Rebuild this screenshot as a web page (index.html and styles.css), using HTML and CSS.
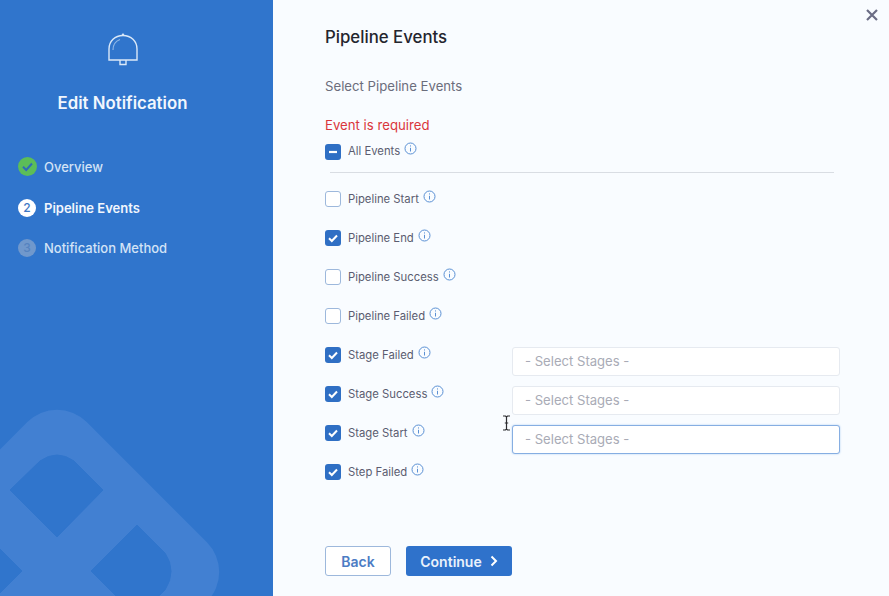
FILE: index.html
```html
<!DOCTYPE html>
<html lang="en">
<head>
<meta charset="utf-8">
<title>Edit Notification</title>
<link rel="stylesheet" href="styles.css">
</head>
<body>
<div class="dialog">
  <aside class="side">
    <svg class="mark" width="273" height="596" viewBox="0 0 273 596" aria-hidden="true">
      <rect class="mark-body" x="-70" y="445" width="254" height="254" rx="42" transform="rotate(45 57 572)"/>
      <path class="mark-hole" d="M10 490 L40 461 Q57 449 74 461 L103 490 L57 537 Z"/>
      <path class="mark-hole" d="M91 571 L137 525 L165 553 Q177 571 165 590 L137 617 Z"/>
      <path class="mark-hole" d="M22 571 L-24 525 L-50 571 L-24 617 Z"/>
    </svg>
    <svg class="bell" width="32" height="34" viewBox="0 0 32 34" aria-hidden="true">
      <path d="M2 27 V16 C2 8 8 2.500 16 2.500 C24 2.500 30 8 30 16 V27 Z" fill="none" stroke="#dbe9f8" stroke-width="1.400"/>
      <path d="M15 2.300 L16 1 L17 2.300" fill="none" stroke="#dbe9f8" stroke-width="1.200"/>
      <path d="M13 27 V31.500 H19 V27" fill="none" stroke="#dbe9f8" stroke-width="1.400"/>
      <path d="M6 17 C6 12 9 8 13 6.500" fill="none" stroke="#8db6e6" stroke-width="1.200"/>
    </svg>
    <h2 class="side-title">Edit Notification</h2>
    <ol class="steps">
      <li class="step step-done">
        <span class="bullet bullet-done">
          <svg width="19" height="19" viewBox="0 0 19 19" aria-hidden="true"><path d="M5 9.800 L8.200 13 L14 6.500" fill="none" stroke="#2f6bb8" stroke-width="2"/></svg>
        </span>
        <span>Overview</span>
      </li>
      <li class="step step-active"><span class="bullet bullet-active">2</span><span>Pipeline Events</span></li>
      <li class="step step-next"><span class="bullet bullet-next">3</span><span>Notification Method</span></li>
    </ol>
  </aside>
  <main class="main">
    <button class="close" type="button" aria-label="Close">
      <svg width="12" height="12" viewBox="0 0 12 12" aria-hidden="true"><path d="M1 1 L11 11 M11 1 L1 11" stroke="#6b6d85" stroke-width="2.200"/></svg>
    </button>
    <h1 class="title">Pipeline Events</h1>
    <p class="sub">Select Pipeline Events</p>
    <p class="error">Event is required</p>
    <div class="row row-all">
      <span class="check check-on"><svg width="16" height="16" viewBox="0 0 16 16" aria-hidden="true"><path d="M4 8 H12" stroke="#fff" stroke-width="2.200"/></svg></span>
      <span class="label">All Events</span>
      <svg class="info" width="13" height="13" viewBox="0 0 13 13" aria-hidden="true"><circle cx="6.500" cy="6.500" r="5.500"/><path d="M6.500 5.800 V9.500 M6.500 3.400 V4.500"/></svg>
    </div>
    <hr class="rule">
    <div class="list">
      <div class="row">
        <span class="check"></span><span class="label">Pipeline Start</span>
        <svg class="info" width="13" height="13" viewBox="0 0 13 13" aria-hidden="true"><circle cx="6.500" cy="6.500" r="5.500"/><path d="M6.500 5.800 V9.500 M6.500 3.400 V4.500"/></svg>
      </div>
      <div class="row">
        <span class="check check-on"><svg width="16" height="16" viewBox="0 0 16 16" aria-hidden="true"><path d="M4 8.300 L6.800 11 L12 5.500" fill="none" stroke="#fff" stroke-width="2"/></svg></span><span class="label">Pipeline End</span>
        <svg class="info" width="13" height="13" viewBox="0 0 13 13" aria-hidden="true"><circle cx="6.500" cy="6.500" r="5.500"/><path d="M6.500 5.800 V9.500 M6.500 3.400 V4.500"/></svg>
      </div>
      <div class="row">
        <span class="check"></span><span class="label">Pipeline Success</span>
        <svg class="info" width="13" height="13" viewBox="0 0 13 13" aria-hidden="true"><circle cx="6.500" cy="6.500" r="5.500"/><path d="M6.500 5.800 V9.500 M6.500 3.400 V4.500"/></svg>
      </div>
      <div class="row">
        <span class="check"></span><span class="label">Pipeline Failed</span>
        <svg class="info" width="13" height="13" viewBox="0 0 13 13" aria-hidden="true"><circle cx="6.500" cy="6.500" r="5.500"/><path d="M6.500 5.800 V9.500 M6.500 3.400 V4.500"/></svg>
      </div>
      <div class="row">
        <div class="cell">
          <span class="check check-on"><svg width="16" height="16" viewBox="0 0 16 16" aria-hidden="true"><path d="M4 8.300 L6.800 11 L12 5.500" fill="none" stroke="#fff" stroke-width="2"/></svg></span><span class="label">Stage Failed</span>
          <svg class="info" width="13" height="13" viewBox="0 0 13 13" aria-hidden="true"><circle cx="6.500" cy="6.500" r="5.500"/><path d="M6.500 5.800 V9.500 M6.500 3.400 V4.500"/></svg>
        </div>
        <div class="select">- Select Stages -</div>
      </div>
      <div class="row">
        <div class="cell">
          <span class="check check-on"><svg width="16" height="16" viewBox="0 0 16 16" aria-hidden="true"><path d="M4 8.300 L6.800 11 L12 5.500" fill="none" stroke="#fff" stroke-width="2"/></svg></span><span class="label">Stage Success</span>
          <svg class="info" width="13" height="13" viewBox="0 0 13 13" aria-hidden="true"><circle cx="6.500" cy="6.500" r="5.500"/><path d="M6.500 5.800 V9.500 M6.500 3.400 V4.500"/></svg>
        </div>
        <div class="select">- Select Stages -</div>
      </div>
      <div class="row">
        <div class="cell">
          <span class="check check-on"><svg width="16" height="16" viewBox="0 0 16 16" aria-hidden="true"><path d="M4 8.300 L6.800 11 L12 5.500" fill="none" stroke="#fff" stroke-width="2"/></svg></span><span class="label">Stage Start</span>
          <svg class="info" width="13" height="13" viewBox="0 0 13 13" aria-hidden="true"><circle cx="6.500" cy="6.500" r="5.500"/><path d="M6.500 5.800 V9.500 M6.500 3.400 V4.500"/></svg>
        </div>
        <div class="select select-focus">- Select Stages -</div>
      </div>
      <div class="row">
        <span class="check check-on"><svg width="16" height="16" viewBox="0 0 16 16" aria-hidden="true"><path d="M4 8.300 L6.800 11 L12 5.500" fill="none" stroke="#fff" stroke-width="2"/></svg></span><span class="label">Step Failed</span>
        <svg class="info" width="13" height="13" viewBox="0 0 13 13" aria-hidden="true"><circle cx="6.500" cy="6.500" r="5.500"/><path d="M6.500 5.800 V9.500 M6.500 3.400 V4.500"/></svg>
      </div>
    </div>
    <div class="actions">
      <button class="btn btn-back" type="button">Back</button>
      <button class="btn btn-next" type="button">Continue
        <svg width="8" height="12" viewBox="0 0 8 12" aria-hidden="true"><path d="M1.500 1.500 L6 6 L1.500 10.500" fill="none" stroke="#fff" stroke-width="2"/></svg>
      </button>
    </div>
    <svg class="cursor" width="9" height="16" viewBox="0 0 9 16" aria-hidden="true">
      <path d="M1 1 H3.500 L4.500 2 L5.500 1 H8 M4.500 2 V14 M1 15 H3.500 L4.500 14 L5.500 15 H8 M2.800 8 H6.200" fill="none" stroke="#2c2c30" stroke-width="1.200"/>
    </svg>
  </main>
</div>
</body>
</html>
```
FILE: styles.css
```css
* { box-sizing: border-box; }
html, body { margin: 0; height: 100%; }
body { font-family: Inter, "Liberation Sans", sans-serif; background: #f9fcff; overflow: hidden; }
.dialog { display: flex; width: 889px; height: 596px; }

.side {
  position: relative;
  width: 273px;
  flex: none;
  background: #3075cc;
  display: flex;
  flex-direction: column;
  overflow: hidden;
  color: #e6f0fb;
}
.mark { position: absolute; left: 0; top: 0; }
.mark-body { fill: #4280d2; }
.mark-hole { fill: #3075cc; stroke: #3075cc; stroke-width: 1; stroke-linejoin: round; }
.bell { position: relative; margin: 33px 0 0 107px; display: block; }
.side-title {
  position: relative;
  margin: 26px 0 0;
  width: 245px;
  font-size: 16.800px;
  line-height: 20px;
  font-weight: 600;
  text-align: center;
  color: #f1f6fd;
}
.steps { position: relative; list-style: none; margin: 44px 0 0; padding: 0 0 0 18px; }
.step { display: flex; align-items: center; height: 19px; font-size: 13px; gap: 7px; margin-bottom: 22px; }
.step-next { margin-top: -1px; }
.step-done { color: #d3e3f6; font-weight: 500; }
.step-active { color: #f1f6fd; font-weight: 600; }
.step-next { color: #d3e3f6; font-weight: 500; }
.bullet {
  width: 19px; height: 19px; border-radius: 50%;
  display: flex; align-items: center; justify-content: center;
  font-size: 12px; font-weight: 500; flex: none;
}
.bullet-done { background: #5cbd58; }
.bullet-active { background: #fff; color: #3f78c4; width: 18px; height: 18px; margin-right: 1px; }
.bullet-next { background: #7098cc; color: #5583c0; width: 18px; height: 18px; margin-right: 1px; }

.main { position: relative; flex: 1; padding: 27px 0 0 52px; }
.close { position: absolute; right: 11px; top: 9px; padding: 0; border: 0; background: none; display: flex; }
.title { margin: 0; font-size: 16.800px; line-height: 20px; font-weight: 500; color: #24252e; }
.sub { margin: 29px 0 0; font-size: 13.200px; line-height: 20px; color: #6b6d7c; }
.error { margin: 19px 0 0; font-size: 13.200px; line-height: 20px; color: #d9363c; }

.row { display: flex; align-items: center; height: 39px; }
.row-all { height: 20px; margin-top: 6px; }
.cell { display: flex; align-items: center; width: 187px; flex: none; }
.check {
  width: 16px; height: 16px; flex: none;
  border: 1.500px solid #9db8dc; border-radius: 3px; background: #fff;
  display: flex; margin: 1px 7px 0 0;
}
.check-on { border: 0; background: #2f6fc4; }
.label { font-size: 11.300px; line-height: 16px; color: #5b5c70; }
.info { margin: -5px 0 0 4px; flex: none; fill: none; stroke: #5a90d4; stroke-width: 1; }
.rule { margin: 11px 0 0 5px; width: 504px; height: 1px; border: 0; background: #d9dde3; }
.list { margin-top: 6px; }

.select {
  width: 328px; height: 29px; margin-top: 13px; flex: none;
  padding: 0 12px;
  display: flex; align-items: center;
  background: #fff; border: 1px solid #e6eaf0; border-radius: 3px;
  font-size: 13.100px; color: #a9abb6;
}
.select-focus { border: 1.500px solid #86aee2; box-shadow: 0 0 2px #a9c8ee; }

.actions { display: flex; gap: 15px; margin-top: 55px; }
.btn {
  height: 30px; padding: 0; border-radius: 3px;
  font-family: inherit; font-size: 14px; font-weight: 600;
  display: flex; align-items: center; justify-content: center; gap: 8px;
}
.btn-back { width: 66px; background: #fff; border: 1.500px solid #9db8dc; color: #4c7cc4; }
.btn-next { width: 106px; background: #2f72cb; border: 0; color: #e9f1fb; }
.cursor { position: absolute; left: 229px; top: 415px; }
```
